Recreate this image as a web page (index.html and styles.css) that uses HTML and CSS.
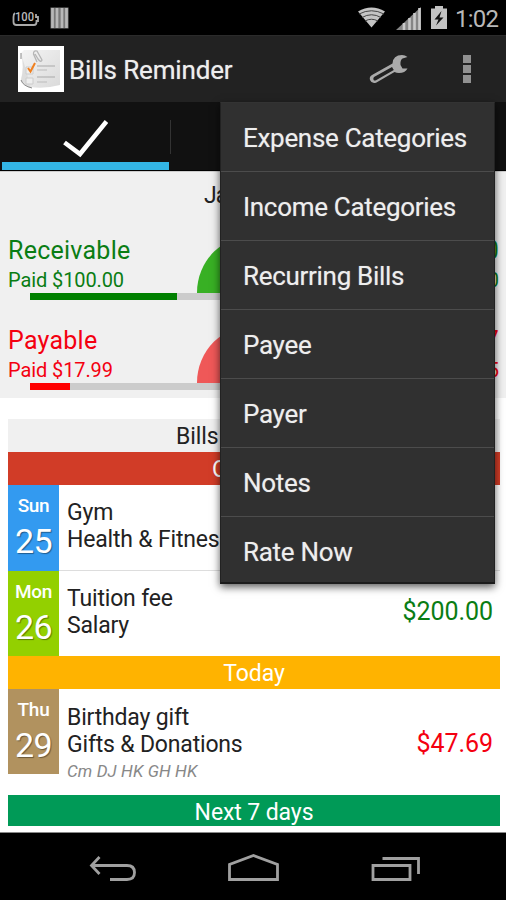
FILE: index.html
```
<!DOCTYPE html>
<html lang="en">
<head>
    <meta charset="UTF-8">
    <meta name="viewport" content="width=device-width, initial-scale=1.0">
    <title>Bills Reminder</title>
    <link rel="stylesheet" href="styles.css">
</head>
<body>
    <div class="phone">
        <header class="status">
            <svg class="status-left" width="60" height="24" viewBox="10 6 60 24">
                <path d="M15 13 Q13.500 14 13.500 17 V22 Q13.500 25 16.500 25 H34 Q36.500 25 36.500 22 V21 H38 V17 H36 V14" fill="none" stroke="#aaa" stroke-width="1.800"/>
                <text x="15" y="21" class="battery-text" textLength="19" lengthAdjust="spacingAndGlyphs">100</text>
                <rect x="50.500" y="7.500" width="18" height="21" fill="#777"/>
                <path d="M52.500 8V28M57 8V28M62 8V28M66.500 8V28" stroke="#b8b8b8" stroke-width="2.700"/>
            </svg>
            <svg class="status-right" width="92" height="26" viewBox="356 5 92 26">
                <path d="M358 11.500 Q371.500 3.500 385 11.500 L371.500 27.500 Z" fill="#c4c4c4"/>
                <path d="M359 14 Q371.500 7.500 384 14M362 17.500 Q371.500 12 381 17.500M365 21 Q371.500 17.500 378 21" fill="none" stroke="#444" stroke-width="1"/>
                <path d="M396 30 L421 7 V30 Z" fill="#858585"/>
                <path d="M404 30V23M409.500 30V18M414.500 30V13M419.500 30V8" stroke="#c8c8c8" stroke-width="2.600"/>
                <path d="M431 8.500H435V6H443V8.500H447V29H431Z" fill="#c2c2c2"/>
                <path d="M441.500 11 L434.500 19.500 H438.500 L436 25.500 L443.500 17.500 H439.500 Z" fill="#111"/>
            </svg>
            <span class="clock">1:02</span>
        </header>

        <nav class="actionbar">
            <svg class="logo" width="48" height="48" viewBox="0 0 48 48">
                <defs>
                    <linearGradient id="paper" x1="0" y1="0" x2="1" y2="1">
                        <stop offset="0" stop-color="#f4f4f4"/>
                        <stop offset="1" stop-color="#dadada"/>
                    </linearGradient>
                </defs>
                <rect x="1" y="1" width="46" height="46" fill="#fff"/>
                <path d="M7 5 H43 V40 Q28 44 13 42 Q5 40 4 36 Q7 20 4 8 Z" fill="url(#paper)"/>
                <path d="M4 8 Q8 22 4 35 Q6 41 15 43 Q10 38 11 32 Q8 22 4 8" fill="#ddd"/>
                <path d="M4 8 V14M4 35 Q6 41 15 43" fill="none" stroke="#888"/>
                <path d="M9 22H16V29H9ZM9 33H16V39H9Z" fill="#eee" stroke="#ccc"/>
                <path d="M20 21H38M20 32H38" stroke="#aaa" stroke-width="1.200"/>
                <path d="M20 25H30M20 37H30" stroke="#bbb" stroke-width="1.200"/>
                <path d="M11 23 L13.500 26.500 L18 18" fill="none" stroke="#f08020" stroke-width="2"/>
                <path d="M20 17 L16.500 9 Q16.500 5 20 6 L25 15 Q24 18 21 14 L18 9" fill="none" stroke="#b5b5b5" stroke-width="1.300"/>
            </svg>
            <h1 class="title">Bills Reminder</h1>
            <svg class="wrench" width="42" height="32" viewBox="368 53 42 32">
                <path fill-rule="evenodd" d="M392.500 63.500 Q393 55 402 55 Q405 55 407.500 57 L402.500 58.500 Q400 60 400.500 65 L402.500 68.500 L407.500 68.500 Q405 73 399 73 Q396.500 73 394.500 72 L376.500 82.500 Q372 84.500 370 80 Q369 76.500 372 75 Z M392 67 L374 77 Q372.800 78.500 373.600 80 Q374.500 81 376 80.200 L393.800 70 Z" fill="#aaa"/>
            </svg>
            <svg class="dots" width="10" height="30" viewBox="0 0 10 30">
                <path d="M1 1H9V9H1ZM1 11H9V19H1ZM1 21H9V29H1Z" fill="#919191"/>
            </svg>
        </nav>

        <div class="tabs">
            <div class="tab tab-on">
                <svg width="46" height="40" viewBox="62 118 46 40">
                    <path d="M64.500 142.500 L80 154 L106.500 121.500" fill="none" stroke="#fff" stroke-width="4.600"/>
                </svg>
            </div>
            <div class="tab-line"></div>
        </div>

        <main class="content">
            <section class="summary">
                <div class="month">Ja</div>
                <div class="account green">
                    <div class="account-row"><span>Receivable</span><span>0</span></div>
                    <div class="account-row small"><span>Paid $100.00</span><span>0</span></div>
                    <div class="pie"></div>
                    <div class="bar"><div class="bar-fill" style="width: 147px"></div></div>
                </div>
                <div class="account red">
                    <div class="account-row"><span>Payable</span><span>7</span></div>
                    <div class="account-row small"><span>Paid $17.99</span><span>5</span></div>
                    <div class="pie"></div>
                    <div class="bar"><div class="bar-fill" style="width: 40px"></div></div>
                </div>
            </section>

            <section class="bills">
                <div class="head head-grey">Bills</div>
                <div class="head head-red">O</div>
                <div class="bill">
                    <div class="day day-blue"><span class="week">Sun</span><span class="date">25</span></div>
                    <div class="info"><span>Gym</span><span>Health &amp; Fitnes</span></div>
                </div>
                <div class="bill">
                    <div class="day day-green"><span class="week">Mon</span><span class="date">26</span></div>
                    <div class="info"><span>Tuition fee</span><span>Salary</span></div>
                    <div class="amount green">$200.00</div>
                </div>
                <div class="head head-orange">Today</div>
                <div class="bill bill-note">
                    <div class="day day-brown"><span class="week">Thu</span><span class="date">29</span></div>
                    <div class="info"><span>Birthday gift</span><span>Gifts &amp; Donations</span><em>Cm DJ HK GH HK</em></div>
                    <div class="amount red">$47.69</div>
                </div>
                <div class="head head-green">Next 7 days</div>
            </section>
        </main>

        <footer class="navbar">
            <svg width="506" height="67" viewBox="0 833 506 67" fill="none" stroke="#a0a0a0" stroke-width="2.800">
                <path d="M99.500 857 L91.500 865.500 L99.500 874 M91.500 865.500 H127 Q134.500 865.500 134.500 872.500 Q134.500 879.500 127 879.500 H110"/>
                <path d="M229.500 879.500 V864.500 L253.500 855.500 L277.500 864.500 V879.500 Z"/>
                <path d="M373 865.500 H410 V879.500 H373 Z M382.500 858.500 H418.500 V874"/>
            </svg>
        </footer>

        <ul class="menu">
            <li>Expense Categories</li>
            <li>Income Categories</li>
            <li>Recurring Bills</li>
            <li>Payee</li>
            <li>Payer</li>
            <li>Notes</li>
            <li>Rate Now</li>
        </ul>
    </div>
</body>
</html>
```

FILE: styles.css
```
* {
    box-sizing: border-box;
}

body {
    margin: 0;
    background: #000;
    font-family: Roboto, "Noto Sans", sans-serif;
}

.phone {
    position: relative;
    width: 506px;
    height: 900px;
    overflow: hidden;
    display: flex;
    flex-direction: column;
}

/* top bars */
.status {
    height: 35px;
    display: flex;
    align-items: flex-start;
    background: #000;
    flex: none;
}

.status-left {
    margin: 6px 0 0 10px;
}

.status-right {
    margin: 5px 0 0 286px;
}

.battery-text {
    font-size: 13px;
    font-weight: 500;
    fill: #bbb;
}

.clock {
    margin-left: 7px;
    font-size: 24px;
    line-height: 38px;
    letter-spacing: -.8px;
    color: #b8b8b8;
}

.actionbar {
    height: 67px;
    display: flex;
    align-items: center;
    background: #222;
    border-top: 1px solid #2b2b2b;
    flex: none;
}

.logo {
    margin-left: 17px;
}

.title {
    margin: 2px 0 0 4px;
    width: 299px;
    font-size: 26px;
    font-weight: 400;
    letter-spacing: -.15px;
    line-height: 65px;
    color: #eee;
    text-shadow: 0 0 1px #999;
}

.dots {
    margin-left: 52px;
}

.tabs {
    height: 69px;
    display: flex;
    align-items: flex-start;
    background: #111;
    border-bottom: 1px solid #000;
    flex: none;
}

.tab {
    width: 167px;
    height: 68px;
    margin-left: 2px;
    padding: 16px 0 0 60px;
}

.tab-on {
    border-bottom: 8px solid #33b5e5;
}

.tab-line {
    width: 1px;
    height: 34px;
    margin: 18px 0 0 1px;
    background: #333;
}

/* summary */
.content {
    height: 662px;
    background: #fff;
    border-bottom: 1px solid #888;
    flex: none;
}

.summary {
    height: 227px;
    background: #f0f0f0;
    border-top: 1px solid #ccc;
}

.month {
    height: 62px;
    padding: 9px 0 0 204px;
    font-size: 23px;
    line-height: 30px;
    letter-spacing: -1px;
    color: #222;
}

.account {
    position: relative;
    height: 90px;
    padding-left: 8px;
}

.account-row {
    display: flex;
    justify-content: space-between;
    padding-right: 7px;
    font-size: 25px;
    line-height: 34px;
    letter-spacing: .25px;
}

.small {
    font-size: 20px;
    line-height: 25px;
    letter-spacing: -.1px;
}

.green {
    color: #0a7d14;
}

.red {
    color: #f40010;
}

.pie {
    position: absolute;
    left: 197px;
    top: 1px;
    width: 115px;
    height: 58px;
    border-radius: 58px 58px 0 0;
    background: #38b024;
}

.red .pie {
    background: #ef5858;
}

.bar {
    width: 446px;
    height: 7px;
    margin-left: 22px;
    background: #ccc;
}

.bar-fill {
    height: 7px;
    background: #008000;
}

.red .bar-fill {
    background: #f00;
}

/* bill list */
.bills {
    margin: 21px 6px 0 8px;
}

.head {
    height: 33px;
    line-height: 36px;
    text-align: center;
    font-size: 23px;
    letter-spacing: -.1px;
    color: #fff;
}

.head-grey {
    padding-left: 168px;
    text-align: left;
    background: #f0f0f0;
    color: #222;
}

.head-red {
    padding-left: 204px;
    text-align: left;
    background: #d13c27;
}

.head-orange {
    background: #ffb300;
}

.head-green {
    height: 31px;
    background: #009a57;
}

.bill {
    display: flex;
    height: 86px;
    border-bottom: 1px solid #ddd;
}

.bill + .bill {
    height: 85px;
    border: 0;
}

.bill-note {
    height: 106px;
    border: 0;
}

.day {
    width: 51px;
    height: 86px;
    display: flex;
    flex-direction: column;
    align-items: center;
    color: #fff;
    text-shadow: 1px 1px 1px rgba(0, 0, 0, .4);
}

.bill-note .day,
.bill + .bill .day {
    height: 85px;
}

.day-blue {
    background: #339af0;
}

.day-green {
    background: #93d000;
}

.day-brown {
    background: #b1925f;
}

.week {
    margin-top: 8px;
    font-size: 19px;
    line-height: 26px;
    letter-spacing: -.3px;
    font-weight: 500;
    text-shadow: none;
}

.date {
    font-size: 34px;
    line-height: 44px;
    letter-spacing: -.5px;
}

.info {
    display: flex;
    flex-direction: column;
    flex: 1;
    padding: 14px 0 0 8px;
    font-size: 23px;
    line-height: 27px;
    letter-spacing: -.18px;
    color: #222;
    white-space: nowrap;
}

.bill-note .info {
    padding-top: 15px;
}

.info em {
    font-size: 17px;
    letter-spacing: .1px;
    color: #888;
}

.amount {
    padding-right: 7px;
    font-size: 25px;
    letter-spacing: -.05px;
    line-height: 82px;
}

.bill-note .amount {
    line-height: 109px;
}

/* bottom keys */
.navbar {
    height: 67px;
    background: #000;
    flex: none;
}

.navbar svg {
    display: block;
}

/* overflow menu */
.menu {
    position: absolute;
    left: 220px;
    top: 102px;
    width: 275px;
    height: 482px;
    margin: 0;
    padding: 0;
    list-style: none;
    background: #303030;
    border: 1px solid #222;
    border-top-color: #333;
    border-bottom: 2px solid #1b1b1b;
    box-shadow: 0 3px 8px rgba(0, 0, 0, .65);
}

.menu li {
    height: 69px;
    padding-left: 22px;
    border-bottom: 1px solid #4c4c4c;
    font-size: 26px;
    letter-spacing: -.3px;
    line-height: 71px;
    color: #eee;
    text-shadow: 0 0 1px #888;
}

.menu li:last-child {
    border: 0;
    height: 65px;
}
```
